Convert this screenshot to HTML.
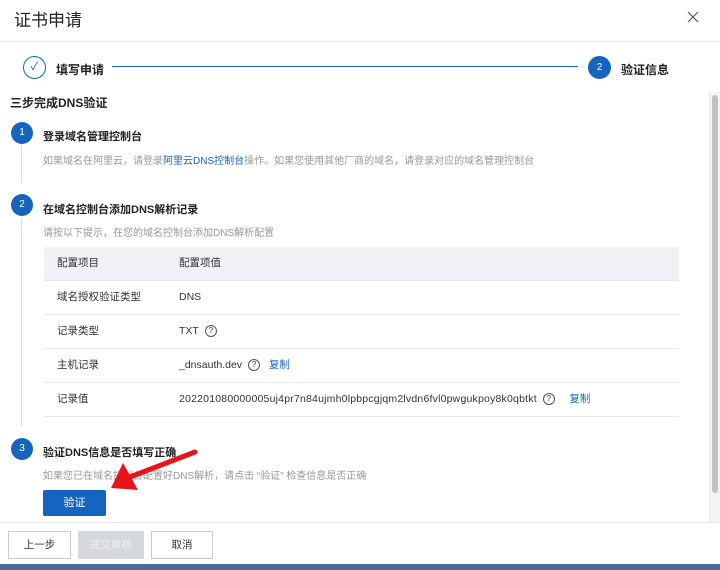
<!DOCTYPE html>
<html><head><meta charset="utf-8"><style>
*{margin:0;padding:0;box-sizing:border-box}
body{width:720px;height:570px;overflow:hidden;background:#fff;font-family:"Liberation Sans","Noto Sans CJK SC",sans-serif;color:#333;position:relative}
.a{position:absolute}
.title{left:14px;top:6px;font-size:17px;color:#222}
.circ{border-radius:50%;background:#1565c0;color:#fff;font-size:10px;text-align:center;width:22px;height:22px;line-height:22px}
.h{font-size:11px;font-weight:bold;color:#222}
.g{font-size:10px;color:#999}
.row{position:absolute;left:44px;width:635px;height:34px;border-bottom:1px solid #e8e8e8;font-size:10.5px;line-height:33px;color:#333}
.row span{position:absolute}
.q{display:inline-block;width:12px;height:12px;border:1px solid #555;border-radius:50%;font-size:8px;line-height:10px;text-align:center;vertical-align:middle;margin-left:6px;font-style:normal}
.lk{color:#1565c0}
.btn{position:absolute;top:531px;height:28px;border:1px solid #ccc;background:#fff;font-size:10.5px;text-align:center;line-height:26px;color:#333}
</style></head><body>
<div class="a title">证书申请</div>
<svg class="a" style="left:687px;top:11px" width="12" height="12"><path d="M1,1 L11,11 M11,1 L1,11" stroke="#555" stroke-width="1.2"/></svg>
<div class="a" style="left:0;top:41px;width:720px;height:1px;background:#e6e6e6"></div>
<div class="a" style="left:23px;top:56px;width:23px;height:23px;border:1px solid #1565c0;border-radius:50%;color:#1565c0;font-size:11px;text-align:center;line-height:21px">✓</div>
<div class="a h" style="left:56px;top:61px;font-size:12px">填写申请</div>
<div class="a" style="left:112px;top:66px;width:466px;height:1px;background:#1565c0"></div>
<div class="a circ" style="left:588px;top:56px;width:23px;height:23px;line-height:23px">2</div>
<div class="a h" style="left:621px;top:61px;font-size:12px">验证信息</div>
<div class="a" style="left:709px;top:92px;width:11px;height:430px;background:#f4f4f4;border-left:1px solid #e6e6e6"></div>
<div class="a" style="left:712px;top:95px;width:6px;height:398px;background:#c1c1c1;border-radius:3px"></div>
<div class="a h" style="left:10px;top:94px;font-size:12px">三步完成DNS验证</div>
<div class="a" style="left:21px;top:145px;width:1px;height:38px;background:#ddd"></div>
<div class="a" style="left:21px;top:218px;width:1px;height:208px;background:#ddd"></div>
<div class="a circ" style="left:11px;top:122px">1</div>
<div class="a h" style="left:43px;top:128px">登录域名管理控制台</div>
<div class="a g" style="left:43px;top:152px">如果域名在阿里云，请登录<span class="lk">阿里云DNS控制台</span>操作。如果您使用其他厂商的域名，请登录对应的域名管理控制台</div>
<div class="a circ" style="left:11px;top:194px">2</div>
<div class="a h" style="left:43px;top:201px">在域名控制台添加DNS解析记录</div>
<div class="a g" style="left:43px;top:224px">请按以下提示，在您的域名控制台添加DNS解析配置</div>
<div class="row" style="top:247px;background:#eff1f5;border-bottom:1px solid #e4e6ea"><span style="left:13px">配置项目</span><span style="left:135px">配置项值</span></div>
<div class="row" style="top:281px"><span style="left:13px">域名授权验证类型</span><span style="left:135px">DNS</span></div>
<div class="row" style="top:315px"><span style="left:13px">记录类型</span><span style="left:135px">TXT<i class="q">?</i></span></div>
<div class="row" style="top:349px"><span style="left:13px">主机记录</span><span style="left:135px">_dnsauth.dev<i class="q">?</i>&nbsp;&nbsp;&nbsp;<b class="lk" style="font-weight:normal">复制</b></span></div>
<div class="row" style="top:383px"><span style="left:13px">记录值</span><span style="left:135px"><span style="position:static;letter-spacing:0.2px">202201080000005uj4pr7n84ujmh0lpbpcgjqm2lvdn6fvl0pwgukpoy8k0qbtkt</span><i class="q">?</i>&nbsp;&nbsp;&nbsp;&nbsp;&nbsp;<b class="lk" style="font-weight:normal">复制</b></span></div>
<div class="a circ" style="left:11px;top:438px">3</div>
<div class="a h" style="left:43px;top:444px">验证DNS信息是否填写正确</div>
<div class="a g" style="left:43px;top:467px">如果您已在域名控制台配置好DNS解析，请点击 “验证” 检查信息是否正确</div>
<div class="a" style="left:43px;top:490px;width:63px;height:26px;background:#1565c0;color:#fff;font-size:11px;text-align:center;line-height:26px;border-radius:2px">验证</div>
<svg class="a" style="left:0;top:0" width="720" height="570"><path d="M195,452 L130,477" stroke="#e8141b" stroke-width="5" stroke-linecap="round"/><polygon points="111,488 123,463 138,490" fill="#e8141b"/></svg>
<div class="a" style="left:0;top:522px;width:720px;height:1px;background:#e6e6e6"></div>
<div class="btn" style="left:8px;width:63px">上一步</div>
<div class="btn" style="left:78px;width:66px;background:#d5d8dc;border-color:#d5d8dc;color:#eee">提交审核</div>
<div class="btn" style="left:151px;width:62px">取消</div>
<div class="a" style="left:0;top:564px;width:720px;height:6px;background:#4d6a9c"></div>
</body></html>
